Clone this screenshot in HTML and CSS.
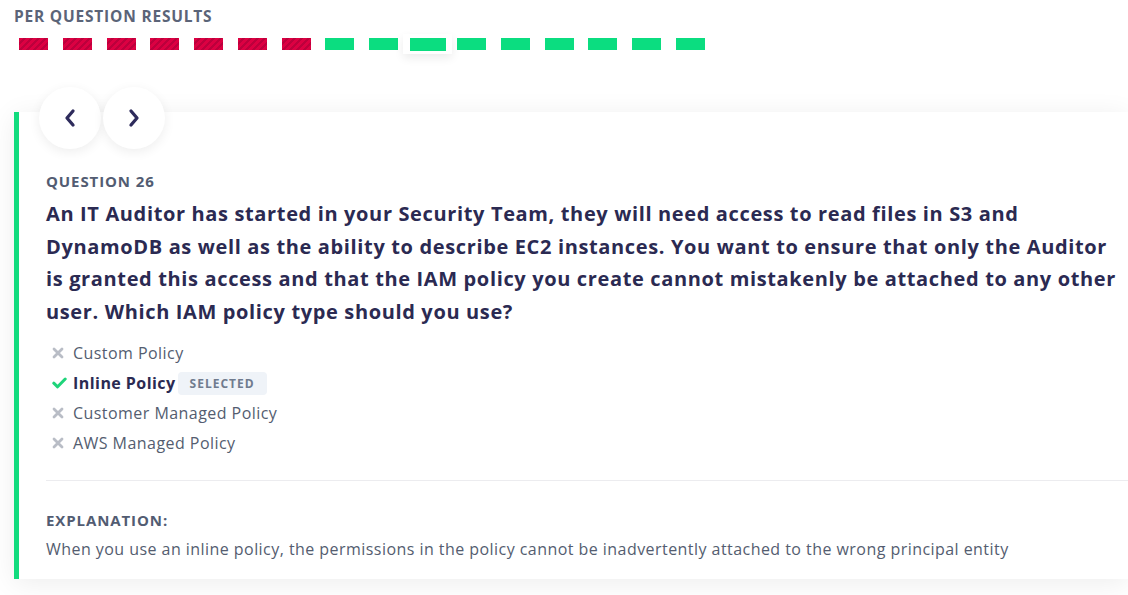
FILE: index.html
```html
<!DOCTYPE html>
<html lang="en">
<head>
<meta charset="utf-8">
<title>Per question results</title>
<link rel="stylesheet" href="styles.css">
</head>
<body>
<section class="results">
  <h2 class="results-title">PER QUESTION RESULTS</h2>
  <div class="bars">
    <span class="bar wrong"></span>
    <span class="bar wrong"></span>
    <span class="bar wrong"></span>
    <span class="bar wrong"></span>
    <span class="bar wrong"></span>
    <span class="bar wrong"></span>
    <span class="bar wrong"></span>
    <span class="bar right"></span>
    <span class="bar right"></span>
    <span class="bar-current"><span class="bar right"></span></span>
    <span class="bar right"></span>
    <span class="bar right"></span>
    <span class="bar right"></span>
    <span class="bar right"></span>
    <span class="bar right"></span>
    <span class="bar right"></span>
  </div>
</section>

<article class="card">
  <nav class="pager">
    <button class="pager-btn" aria-label="Previous">
      <svg width="16" height="20" viewBox="0 0 16 20"><path d="M11 3 L5 10 L11 17" fill="none" stroke="#2e2b5c" stroke-width="3.3" stroke-linecap="round" stroke-linejoin="round"/></svg>
    </button>
    <button class="pager-btn" aria-label="Next">
      <svg width="16" height="20" viewBox="0 0 16 20"><path d="M5 3 L11 10 L5 17" fill="none" stroke="#2e2b5c" stroke-width="3.3" stroke-linecap="round" stroke-linejoin="round"/></svg>
    </button>
  </nav>
  <div class="card-body">
    <div class="label">QUESTION 26</div>
    <h1 class="question">An IT Auditor has started in your Security Team, they will need access to read files in S3 and DynamoDB as well as the ability to describe EC2 instances. You want to ensure that only the Auditor is granted this access and that the IAM policy you create cannot mistakenly be attached to any other user. Which IAM policy type should you use?</h1>
    <ul class="options">
      <li class="option">
        <svg class="icon-x" width="12" height="12" viewBox="0 0 12 12"><path d="M2 2 L10 10 M10 2 L2 10" stroke="#b9bdc6" stroke-width="2.8" stroke-linecap="round"/></svg>
        <span>Custom Policy</span>
      </li>
      <li class="option is-selected">
        <svg class="icon-check" width="15" height="12" viewBox="0 0 15 12"><path d="M1.8 6.2 L5.6 9.8 L13.2 2" fill="none" stroke="#1fd47a" stroke-width="3" stroke-linecap="round" stroke-linejoin="round"/></svg>
        <span class="option-strong">Inline Policy</span>
        <span class="badge">SELECTED</span>
      </li>
      <li class="option">
        <svg class="icon-x" width="12" height="12" viewBox="0 0 12 12"><path d="M2 2 L10 10 M10 2 L2 10" stroke="#b9bdc6" stroke-width="2.8" stroke-linecap="round"/></svg>
        <span>Customer Managed Policy</span>
      </li>
      <li class="option">
        <svg class="icon-x" width="12" height="12" viewBox="0 0 12 12"><path d="M2 2 L10 10 M10 2 L2 10" stroke="#b9bdc6" stroke-width="2.8" stroke-linecap="round"/></svg>
        <span>AWS Managed Policy</span>
      </li>
    </ul>
    <hr class="divider">
    <div class="label label-expl">EXPLANATION:</div>
    <p class="explanation">When you use an inline policy, the permissions in the policy cannot be inadvertently attached to the wrong principal entity</p>
  </div>
</article>
</body>
</html>
```

FILE: styles.css
```css
* { box-sizing: border-box; }

html, body {
  margin: 0;
  background: #ffffff;
  overflow: hidden;
}

body {
  font-family: "Open Sans", "Noto Sans", sans-serif;
  color: #545d70;
  width: 1128px;
  height: 595px;
}

.results {
  padding: 7px 0 0 14px;
}

.results-title {
  margin: 0;
  font-size: 15.5px;
  line-height: 18px;
  font-weight: 700;
  letter-spacing: 0.8px;
  color: #5b6478;
}

.bars {
  display: flex;
  align-items: center;
  height: 12px;
  margin: 13px 0 0 5px;
}

.bar {
  display: block;
  width: 29px;
  height: 12px;
  margin-right: 14.75px;
}

.bar.wrong {
  background: repeating-linear-gradient(135deg, #dc0042 0 3px, #bc003c 3px 5px);
}

.bar.right {
  background: #0bdd80;
}

.bar-current {
  display: block;
  background: #fff;
  padding: 4px 6.5px 3px;
  margin: 0 5px 0 -9.75px;
  box-shadow: 0 4px 10px rgba(0, 0, 0, 0.08);
}

.bar-current .bar {
  width: 36px;
  height: 13px;
  margin: 0;
}

.card {
  display: flow-root;
  margin: 62px 0 0 14px;
  border-left: 5px solid #12dc7e;
  background: #fff;
  box-shadow: 0 4px 26px rgba(0, 0, 0, 0.075);
  padding-bottom: 18px;
}

.pager {
  display: flex;
  gap: 2px;
  margin: -25px 0 0 20px;
}

.pager-btn {
  width: 62px;
  height: 62px;
  border: 0;
  border-radius: 50%;
  background: #fff;
  box-shadow: 0 3px 12px rgba(0, 0, 0, 0.07);
  display: flex;
  align-items: center;
  justify-content: center;
  padding: 0;
  cursor: pointer;
}

.card-body {
  padding: 22px 0 0 27px;
}

.label {
  font-size: 15px;
  line-height: 20px;
  font-weight: 700;
  letter-spacing: 0.9px;
  color: #525c72;
}

.question {
  margin: 7px 0 0;
  padding-right: 8px;
  font-size: 20px;
  line-height: 32.5px;
  font-weight: 700;
  letter-spacing: 0.64px;
  color: #2b2a52;
}

.options {
  list-style: none;
  margin: 10px 0 0;
  padding: 0 0 0 6px;
}

.option {
  display: flex;
  align-items: center;
  height: 30px;
  font-size: 16px;
  letter-spacing: 0.45px;
  color: #545d70;
}

.option svg {
  flex: none;
  margin-right: 9px;
}

.option .icon-check {
  margin-right: 6px;
}

.option-strong {
  font-weight: 700;
  color: #2b2a52;
}

.badge {
  margin-left: 2px;
  padding: 0 12px;
  height: 23px;
  line-height: 23px;
  border-radius: 4px;
  background: #eff3f8;
  color: #707b8e;
  font-size: 12px;
  font-weight: 700;
  letter-spacing: 1px;
}

.divider {
  border: 0;
  border-top: 1px solid #ececef;
  margin: 22px 0 0;
}

.label-expl {
  margin-top: 29px;
}

.explanation {
  margin: 7px 0 0;
  font-size: 16px;
  line-height: 24px;
  letter-spacing: 0.45px;
  color: #545d70;
}
```
